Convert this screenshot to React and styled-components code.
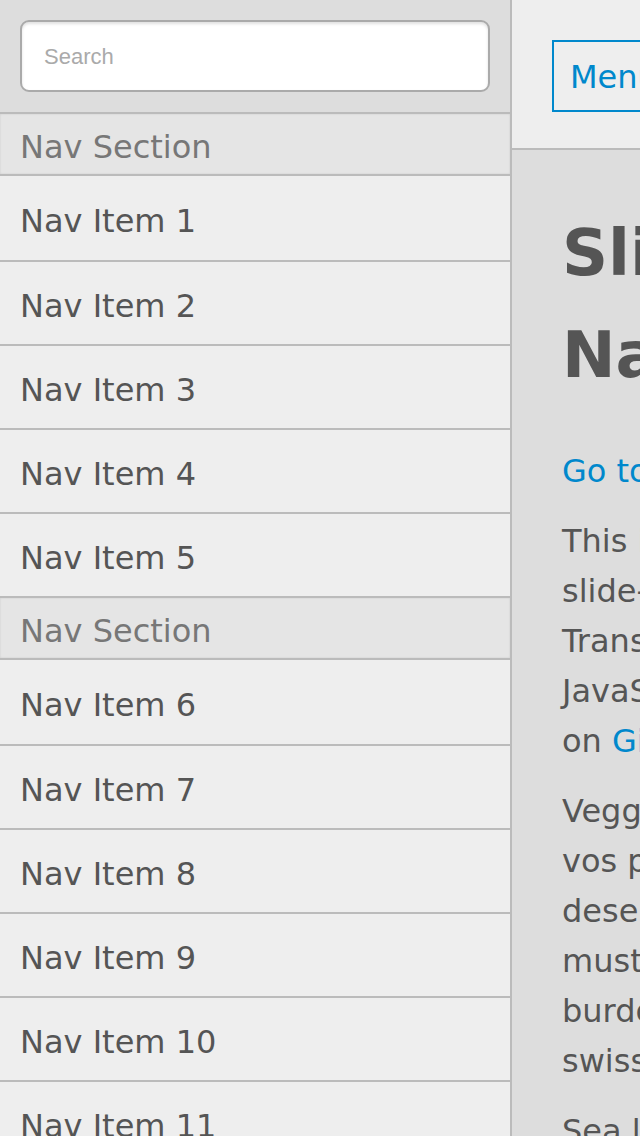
import React from "react";
import styled, { createGlobalStyle } from "styled-components";

const GlobalStyle = createGlobalStyle`
  html, body {
    margin: 0;
    padding: 0;
    overflow: hidden;
    background: #ddd;
  }
  body {
    font-family: "DejaVu Sans", Verdana, sans-serif;
    color: #555;
  }
  * {
    box-sizing: border-box;
  }
`;

const Page = styled.div`
  display: flex;
  width: 1152px;
  min-height: 100vh;
`;

const Nav = styled.nav`
  flex: 0 0 512px;
  background: #eee;
  border-right: 2px solid #bbb;
`;

const SearchBar = styled.div`
  padding: 20px;
  height: 112px;
  background: #ddd;
`;

const SearchInput = styled.input`
  display: block;
  width: 100%;
  height: 72px;
  padding: 2px 22px 0;
  border: 2px solid #aaa;
  border-radius: 9px;
  background: #fff;
  box-shadow: inset 0 2px 3px rgba(0, 0, 0, 0.12);
  font-family: "Liberation Sans", Arial, sans-serif;
  font-size: 22px;
  color: #555;
  outline: none;

  &::placeholder {
    color: #aaa;
  }
`;

const Section = styled.div`
  display: flex;
  align-items: center;
  height: 64px;
  padding: 6px 20px 0;
  background: #e5e5e5;
  border-top: 2px solid #bbb;
  border-bottom: 2px solid #bbb;
  box-shadow: inset 0 0 2px rgba(0, 0, 0, 0.12);
  font-size: 32px;
  color: #777;
`;

const Item = styled.a`
  display: flex;
  align-items: center;
  height: 84px;
  padding: 6px 20px 0;
  border-top: 2px solid #bbb;
  font-size: 32px;
  color: #555;
  text-decoration: none;

  ${Section} + & {
    border-top: none;
  }
`;

const Main = styled.main`
  flex: 0 0 640px;
  background: #ddd;
`;

const TopBar = styled.header`
  height: 150px;
  padding: 40px;
  background: #eee;
  border-bottom: 2px solid #bbb;
`;

const MenuButton = styled.a`
  display: inline-flex;
  align-items: center;
  height: 72px;
  padding: 2px 16px 0;
  border: 2px solid #0088cc;
  color: #0088cc;
  font-size: 32px;
  text-decoration: none;
`;

const Content = styled.div`
  padding: 52px 50px;
`;

const Title = styled.h1`
  margin: 0 0 40px;
  font-size: 64px;
  line-height: 102px;
  font-weight: bold;
  color: #555;
`;

const Text = styled.p`
  margin: 0 0 20px;
  font-size: 32px;
  line-height: 50px;
  white-space: nowrap;
`;

const Link = styled.a`
  color: #0088cc;
  text-decoration: none;
`;

const sections = [
  { title: "Nav Section", items: [1, 2, 3, 4, 5] },
  { title: "Nav Section", items: [6, 7, 8, 9, 10, 11, 12] },
];

export default function App() {
  return (
    <>
      <GlobalStyle />
      <Page>
        <Nav>
          <SearchBar>
            <SearchInput type="text" placeholder="Search" />
          </SearchBar>
          {sections.map((section, i) => (
            <React.Fragment key={i}>
              <Section>{section.title}</Section>
              {section.items.map((n) => (
                <Item key={n} href="#">
                  Nav Item {n}
                </Item>
              ))}
            </React.Fragment>
          ))}
        </Nav>
        <Main>
          <TopBar>
            <MenuButton href="#">Menu</MenuButton>
          </TopBar>
          <Content>
            <Title>Slide-out Navigation</Title>
            <Text>
              <Link href="#">Go to the demo index</Link>
            </Text>
            <Text>
              This is a demonstration of a
              <br />
              slide-out navigation using CSS
              <br />
              Transitions and Transforms, with
              <br />
              JavaScript fallback. Source code
              <br />
              on <Link href="#">GitHub</Link>.
            </Text>
            <Text>
              Veggies es bonus vobis, proinde
              <br />
              vos postulo essum magis kohlrabi
              <br />
              desert raisin tatsoi tomatillo
              <br />
              mustard greens melon azuki bean
              <br />
              burdock garlic gumbo beet greens
              <br />
              swiss chard corn soko endive.
            </Text>
            <Text>
              Sea lettuce lettuce water spinach
              <br />
              winter purslane dandelion.
            </Text>
          </Content>
        </Main>
      </Page>
    </>
  );
}
